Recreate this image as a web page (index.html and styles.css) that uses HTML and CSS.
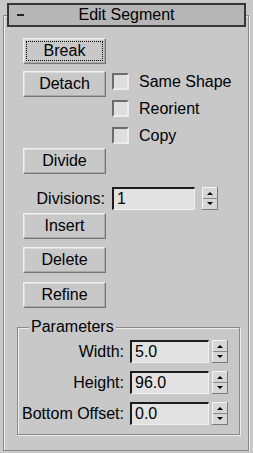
FILE: index.html
```html
<!DOCTYPE html>
<html lang="en">
<head>
  <meta charset="UTF-8">
  <title>Edit Segment</title>
  <link rel="stylesheet" href="styles.css">
</head>
<body>
  <div class="rollout">
    <div class="rollout-head">
      <span class="collapse"></span>
      <span class="title">Edit Segment</span>
    </div>
    <div class="rollout-body">
      <button class="btn focused">Break</button>

      <div class="detach-row">
        <button class="btn">Detach</button>
        <div class="checks">
          <label class="check"><span class="box"></span>Same Shape</label>
          <label class="check"><span class="box"></span>Reorient</label>
          <label class="check"><span class="box"></span>Copy</label>
        </div>
      </div>

      <button class="btn divide">Divide</button>

      <div class="spin-row divisions">
        <span class="spin-label">Divisions:</span>
        <span class="field">1</span>
        <span class="spinner">
          <svg width="16" height="23" viewBox="0 0 16 23">
            <rect x="0" y="0" width="16" height="23" fill="#d6d6d6"/>
            <rect x="0" y="0" width="16" height="1" fill="#f4f4f4"/>
            <rect x="0" y="0" width="1" height="23" fill="#f4f4f4"/>
            <rect x="15" y="0" width="1" height="23" fill="#7c7c7c"/>
            <rect x="0" y="22" width="16" height="1" fill="#7c7c7c"/>
            <rect x="1" y="11" width="14" height="1" fill="#8a8a8a"/>
            <polygon points="5,8 8,5 11,8" fill="#000"/>
            <polygon points="5,15 11,15 8,18" fill="#000"/>
          </svg>
        </span>
      </div>

      <button class="btn insert">Insert</button>
      <button class="btn delete">Delete</button>
      <button class="btn refine">Refine</button>

      <fieldset class="group">
        <legend>Parameters</legend>
        <div class="param-grid">
          <span class="spin-label">Width:</span>
          <span class="field">5.0</span>
          <span class="spinner">
            <svg width="16" height="23" viewBox="0 0 16 23">
              <rect x="0" y="0" width="16" height="23" fill="#d6d6d6"/>
              <rect x="0" y="0" width="16" height="1" fill="#f4f4f4"/>
              <rect x="0" y="0" width="1" height="23" fill="#f4f4f4"/>
              <rect x="15" y="0" width="1" height="23" fill="#7c7c7c"/>
              <rect x="0" y="22" width="16" height="1" fill="#7c7c7c"/>
              <rect x="1" y="11" width="14" height="1" fill="#8a8a8a"/>
              <polygon points="5,8 8,5 11,8" fill="#000"/>
              <polygon points="5,15 11,15 8,18" fill="#000"/>
            </svg>
          </span>

          <span class="spin-label">Height:</span>
          <span class="field">96.0</span>
          <span class="spinner">
            <svg width="16" height="23" viewBox="0 0 16 23">
              <rect x="0" y="0" width="16" height="23" fill="#d6d6d6"/>
              <rect x="0" y="0" width="16" height="1" fill="#f4f4f4"/>
              <rect x="0" y="0" width="1" height="23" fill="#f4f4f4"/>
              <rect x="15" y="0" width="1" height="23" fill="#7c7c7c"/>
              <rect x="0" y="22" width="16" height="1" fill="#7c7c7c"/>
              <rect x="1" y="11" width="14" height="1" fill="#8a8a8a"/>
              <polygon points="5,8 8,5 11,8" fill="#000"/>
              <polygon points="5,15 11,15 8,18" fill="#000"/>
            </svg>
          </span>

          <span class="spin-label">Bottom Offset:</span>
          <span class="field">0.0</span>
          <span class="spinner">
            <svg width="16" height="23" viewBox="0 0 16 23">
              <rect x="0" y="0" width="16" height="23" fill="#d6d6d6"/>
              <rect x="0" y="0" width="16" height="1" fill="#f4f4f4"/>
              <rect x="0" y="0" width="1" height="23" fill="#f4f4f4"/>
              <rect x="15" y="0" width="1" height="23" fill="#7c7c7c"/>
              <rect x="0" y="22" width="16" height="1" fill="#7c7c7c"/>
              <rect x="1" y="11" width="14" height="1" fill="#8a8a8a"/>
              <polygon points="5,8 8,5 11,8" fill="#000"/>
              <polygon points="5,15 11,15 8,18" fill="#000"/>
            </svg>
          </span>
        </div>
      </fieldset>
    </div>
  </div>
</body>
</html>
```

FILE: styles.css
```css
body {
  margin: 0;
  background: #c8c8c8;
  font-family: "Liberation Sans", Arial, sans-serif;
  font-size: 16px;
  color: #000;
}
.rollout {
  margin: 15px 4px 0 3px;
  border: 1px solid #8a8a8a;
  box-shadow: inset 1px 1px 0 #ececec, 1px 1px 0 #ececec;
}
.rollout-head {
  display: grid;
  grid-template-columns: 1fr auto 1fr;
  align-items: center;
  box-sizing: border-box;
  height: 24px;
  margin: -13px 2px 0 3px;
  background: #b6b6b6;
  border: 2px solid #363636;
  line-height: 18px;
}
.collapse {
  width: 7px;
  height: 2px;
  margin-left: 8px;
  background: #222;
}
.rollout-body {
  padding: 11px 0 15px 19px;
}
.btn {
  display: block;
  box-sizing: border-box;
  width: 83px;
  height: 26px;
  padding: 0;
  font: inherit;
  color: #000;
  background: #c8c8c8;
  border: 1px solid;
  border-color: #f2f2f2 #767676 #767676 #f2f2f2;
  box-shadow: inset -1px -1px 0 #a9a9a9, inset 1px 1px 0 #dcdcdc;
}
.btn.focused {
  outline: 1px dotted #000;
  outline-offset: -4px;
}
.detach-row {
  display: grid;
  grid-template-columns: 83px auto;
  column-gap: 6px;
  align-items: start;
  margin-top: 7px;
}
.checks {
  display: flex;
  flex-direction: column;
  gap: 10px;
  margin-top: 2px;
}
.check {
  display: flex;
  align-items: center;
  height: 17px;
  line-height: 17px;
}
.box {
  box-sizing: border-box;
  width: 17px;
  height: 17px;
  margin-right: 10px;
  background: #dedede;
  border: 2px solid;
  border-color: #6c6c6c #ececec #ececec #6c6c6c;
}
.divide {
  margin-top: 4px;
}
.spin-row {
  display: grid;
  grid-template-columns: 82px 83px 16px;
  column-gap: 7px;
  align-items: center;
  height: 23px;
  margin-top: 13px;
}
.spin-label {
  justify-self: end;
  white-space: nowrap;
}
.field {
  box-sizing: border-box;
  height: 23px;
  padding-left: 3px;
  line-height: 20px;
  background: #e2e2e2;
  border-style: solid;
  border-width: 2px 1px 1px 2px;
  border-color: #1c1c1c #f0f0f0 #f0f0f0 #1c1c1c;
}
.spinner {
  display: block;
  height: 23px;
}
.spinner svg {
  display: block;
}
.insert {
  margin-top: 3px;
}
.delete {
  margin-top: 8px;
}
.refine {
  margin-top: 9px;
}
.group {
  box-sizing: border-box;
  width: 221px;
  margin: 10px 0 0 -6px;
  padding: 4px 8px 9px 4px;
  border: 1px solid #8a8a8a;
  box-shadow: inset 1px 1px 0 #ececec, 1px 1px 0 #ececec;
}
.group legend {
  margin-left: 7px;
  padding: 0 2px;
  line-height: 18px;
  background: #c8c8c8;
}
.param-grid {
  display: grid;
  grid-template-columns: 102px 79px 16px;
  column-gap: 6px;
  row-gap: 8px;
  align-items: center;
}
.param-grid .spinner {
  margin-left: -3px;
}
```
